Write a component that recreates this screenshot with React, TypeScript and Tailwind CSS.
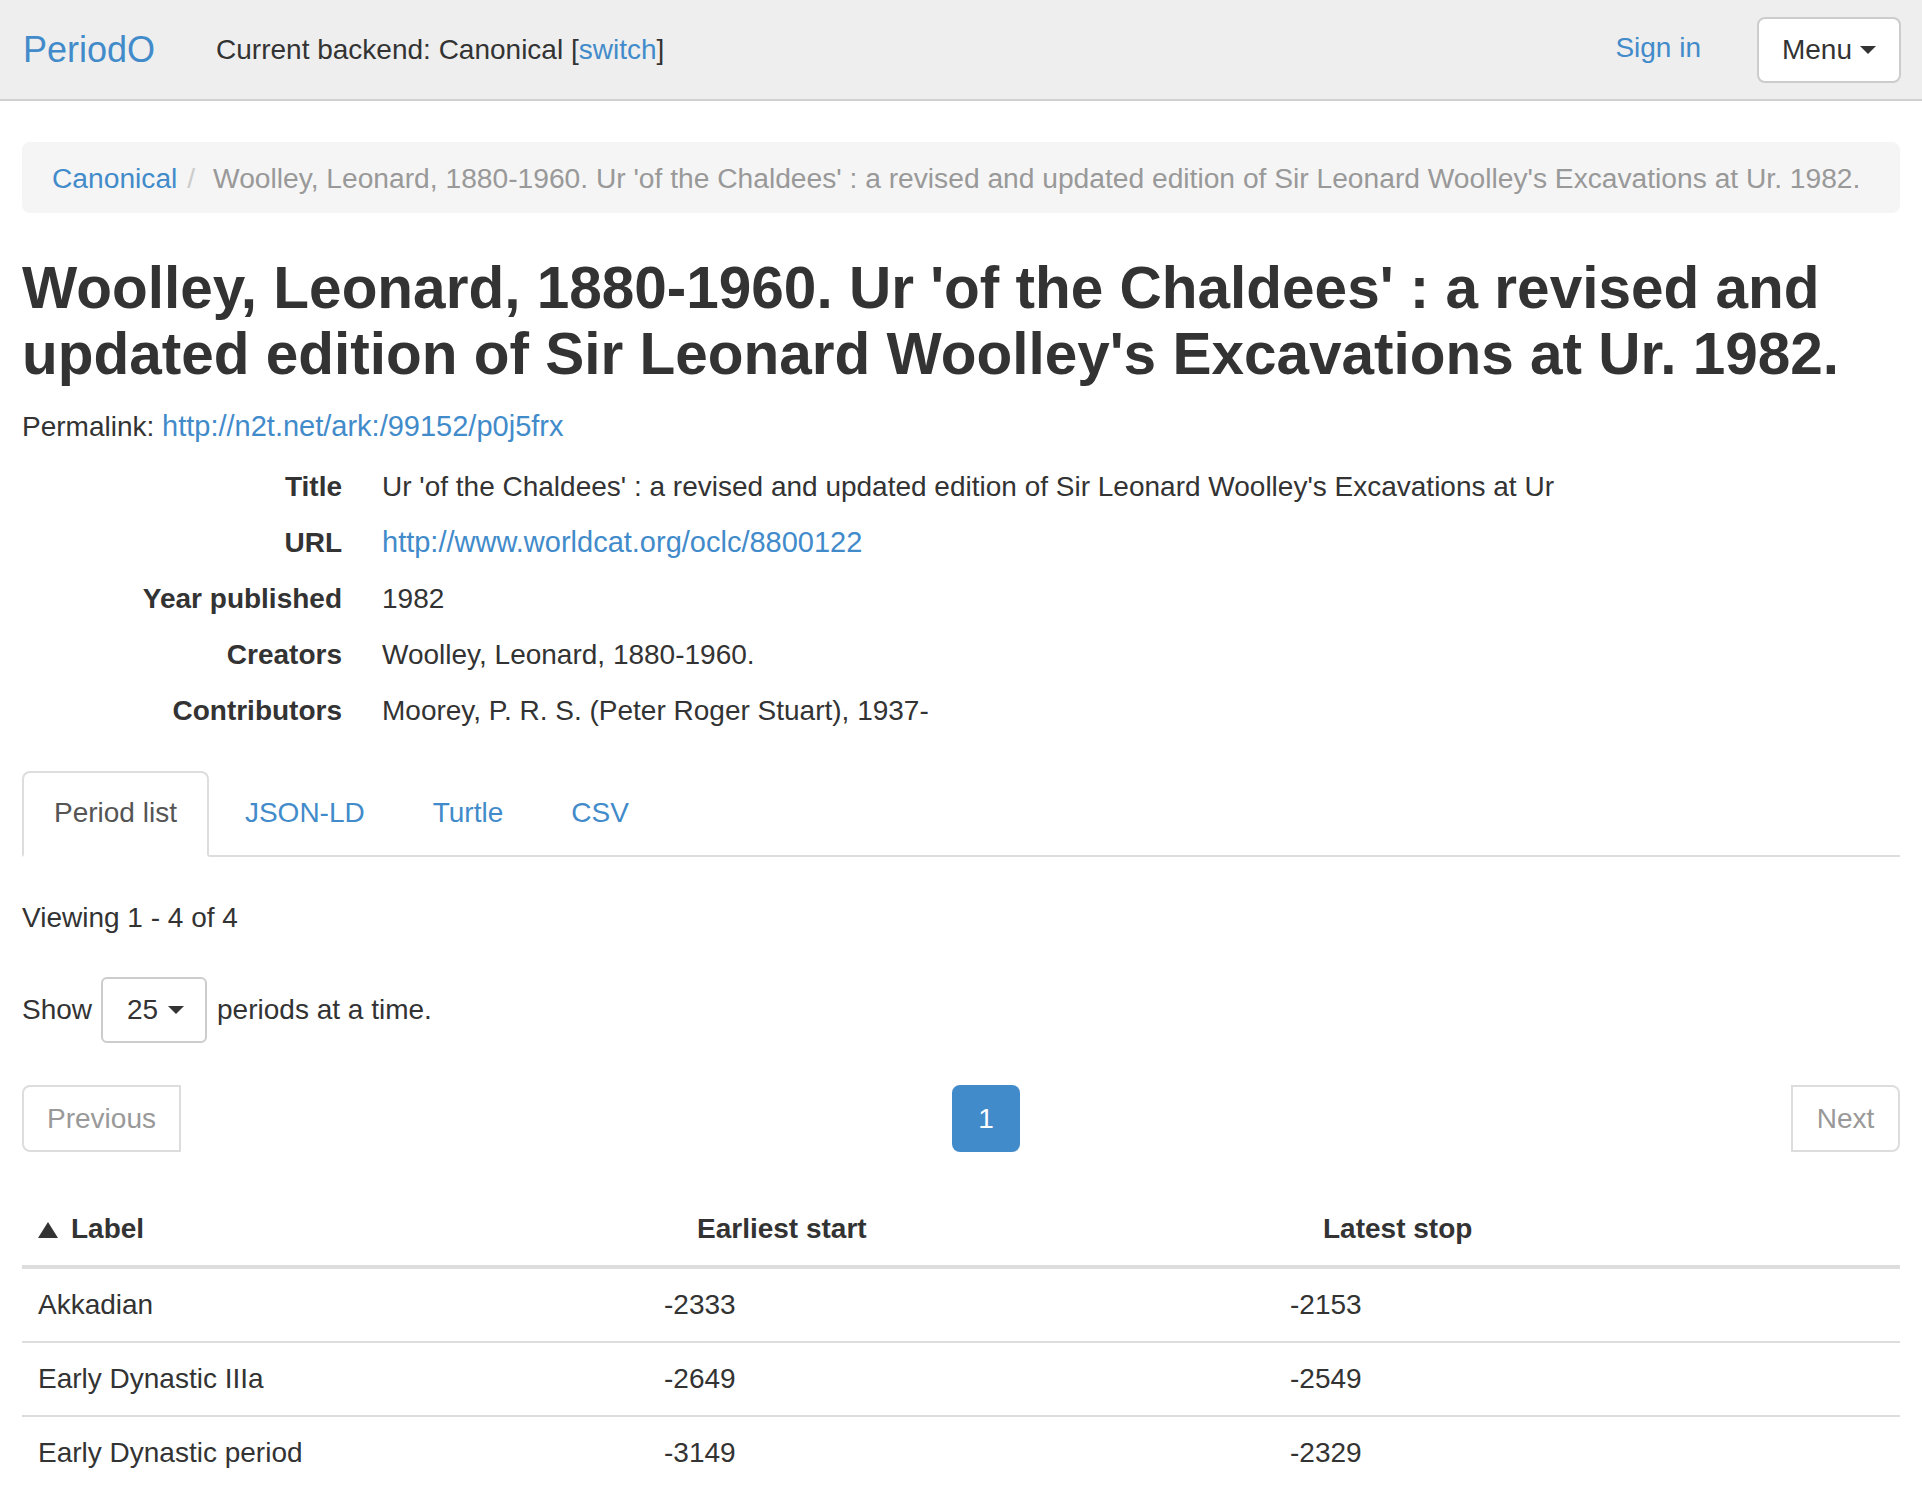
import React from "react";

function Caret() {
  return (
    <span className="inline-block h-0 w-0 border-l-[8px] border-r-[8px] border-t-[8px] border-l-transparent border-r-transparent border-t-[#333]" />
  );
}

function SortTriangle({ visible }: { visible: boolean }) {
  return (
    <svg
      width="20"
      height="16"
      viewBox="0 0 20 16"
      className={visible ? "mr-[13px] inline-block" : "invisible mr-[13px] inline-block"}
      style={{ verticalAlign: "0px" }}
    >
      <polygon points="10,0 20,16 0,16" fill="#333" />
    </svg>
  );
}

const rows = [
  { label: "Akkadian", start: "-2333", stop: "-2153" },
  { label: "Early Dynastic IIIa", start: "-2649", stop: "-2549" },
  { label: "Early Dynastic period", start: "-3149", stop: "-2329" },
];

const details: [string, React.ReactNode][] = [
  ["Title", "Ur 'of the Chaldees' : a revised and updated edition of Sir Leonard Woolley's Excavations at Ur"],
  ["URL", <a className="text-[29px] leading-none text-[#428bca]">http://www.worldcat.org/oclc/8800122</a>],
  ["Year published", "1982"],
  ["Creators", "Woolley, Leonard, 1880-1960."],
  ["Contributors", "Moorey, P. R. S. (Peter Roger Stuart), 1937-"],
];

export default function App() {
  return (
    <div className="h-screen overflow-hidden bg-white font-['Liberation_Sans',Arial,sans-serif] text-[28px] leading-[40px] text-[#333]">
      <nav className="h-[101px] border-b-2 border-[#d0d0d0] bg-[#eeeeee]">
        <div className="flex h-full items-center pl-[23px] pr-[21px]">
          <a className="text-[36px] leading-none text-[#428bca]">PeriodO</a>
          <span className="ml-[61px]">
            Current backend: Canonical [<a className="text-[#428bca]">switch</a>]
          </span>
          <a className="mb-[3px] ml-auto text-[#428bca]">Sign in</a>
          <div className="ml-[56px] flex h-[66px] w-[144px] items-center justify-center gap-[8px] rounded-[8px] border-2 border-[#cccccc] bg-white">
            <span>Menu</span>
            <Caret />
          </div>
        </div>
      </nav>

      <main className="px-[22px]">
        <div className="mt-[41px] flex h-[71px] items-center whitespace-nowrap rounded-[8px] bg-[#f5f5f5] px-[30px] text-[28.2px]">
          <a className="text-[#428bca]">Canonical</a>
          <span className="px-[10px] text-[#cccccc]">/&nbsp;</span>
          <span className="text-[#999999]">
            Woolley, Leonard, 1880-1960. Ur 'of the Chaldees' : a revised and updated edition of Sir Leonard Woolley's Excavations at Ur. 1982.
          </span>
        </div>

        <h2 className="mt-[42px] text-[58.5px] font-bold leading-[66px]">
          Woolley, Leonard, 1880-1960. Ur 'of the Chaldees' : a revised and updated edition of Sir Leonard Woolley's Excavations at Ur. 1982.
        </h2>

        <p className="mt-[20px]">
          Permalink: <a className="text-[29px] leading-none text-[#428bca]">http://n2t.net/ark:/99152/p0j5frx</a>
        </p>

        <dl className="mt-[20px] grid grid-cols-[320px_1fr] gap-x-[40px] gap-y-[16px]">
          {details.map(([k, v]) => (
            <React.Fragment key={k}>
              <dt className="text-right font-bold">{k}</dt>
              <dd>{v}</dd>
            </React.Fragment>
          ))}
        </dl>

        <div className="mt-[40px] flex border-b-2 border-[#dddddd]">
          <div className="-mb-[2px] mr-[4px] rounded-t-[8px] border-2 border-[#dddddd] border-b-white bg-white px-[30px] py-[20px] text-[#555555]">
            Period list
          </div>
          {["JSON-LD", "Turtle", "CSV"].map((t) => (
            <div key={t} className="mr-[4px] border-2 border-transparent px-[30px] py-[20px] text-[#428bca]">
              {t}
            </div>
          ))}
        </div>

        <p className="mt-[41px]">Viewing 1 - 4 of 4</p>

        <div className="mt-[39px] flex h-[66px] items-center">
          <span>Show</span>
          <div className="ml-[9px] flex h-[66px] w-[106px] items-center rounded-[6px] border-2 border-[#cccccc] bg-white pl-[24px]">
            <span>25</span>
            <span className="ml-[10px] flex items-center">
              <Caret />
            </span>
          </div>
          <span className="ml-[10px]">periods at a time.</span>
        </div>

        <div className="mt-[42px] flex items-center justify-between">
          <div className="flex h-[67px] w-[159px] items-center justify-center rounded-l-[8px] border-2 border-[#dddddd] bg-white text-[#999999]">
            Previous
          </div>
          <div className="flex h-[67px] w-[68px] items-center justify-center rounded-[8px] bg-[#428bca] text-white">
            1
          </div>
          <div className="flex h-[67px] w-[109px] items-center justify-center rounded-r-[8px] border-2 border-[#dddddd] bg-white text-[#999999]">
            Next
          </div>
        </div>

        <table className="mt-[41px] w-full table-fixed border-collapse">
          <thead>
            <tr>
              <th className="border-b-4 border-[#dddddd] px-[16px] py-[16px] text-left font-bold">
                <SortTriangle visible={true} />
                Label
              </th>
              <th className="border-b-4 border-[#dddddd] px-[16px] py-[16px] text-left font-bold">
                <SortTriangle visible={false} />
                Earliest start
              </th>
              <th className="border-b-4 border-[#dddddd] px-[16px] py-[16px] text-left font-bold">
                <SortTriangle visible={false} />
                Latest stop
              </th>
            </tr>
          </thead>
          <tbody>
            {rows.map((r) => (
              <tr key={r.label}>
                <td className="border-t-2 border-[#dddddd] px-[16px] py-[16px]">{r.label}</td>
                <td className="border-t-2 border-[#dddddd] px-[16px] py-[16px]">{r.start}</td>
                <td className="border-t-2 border-[#dddddd] px-[16px] py-[16px]">{r.stop}</td>
              </tr>
            ))}
          </tbody>
        </table>
      </main>
    </div>
  );
}
